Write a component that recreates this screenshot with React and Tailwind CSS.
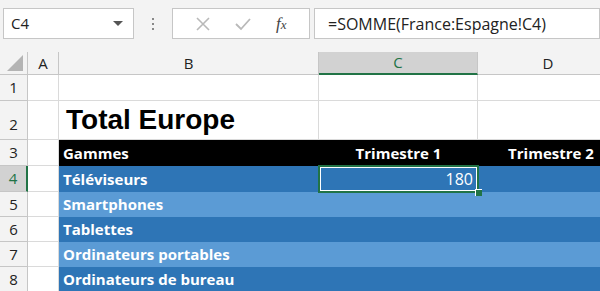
import React from 'react';

const font = { fontFamily: '"Open Sans", "Noto Sans", sans-serif' };

const rows = [
  { n: 1, h: 'h-[26px]' },
  { n: 2, h: 'h-[39px]' },
  { n: 3, h: 'h-[26px]' },
  { n: 4, h: 'h-[26px]' },
  { n: 5, h: 'h-[25px]' },
  { n: 6, h: 'h-[25px]' },
  { n: 7, h: 'h-[25px]' },
  { n: 8, h: 'h-[25px]' },
];

const gammes = {
  4: 'Téléviseurs',
  5: 'Smartphones',
  6: 'Tablettes',
  7: 'Ordinateurs portables',
  8: 'Ordinateurs de bureau',
};

function RowCells({ n }) {
  if (n === 1 || n === 2) {
    return (
      <>
        <div className="w-[31px] shrink-0 border-r border-b border-[#dadada] bg-white" />
        <div className="w-[260px] shrink-0 border-r border-b border-[#dadada] bg-white flex items-end">
          {n === 2 && (
            <span
              className="pl-[7px] pb-[1px] text-[28px] leading-[36px] font-bold text-black"
              style={{ fontFamily: '"Liberation Sans", Arial, sans-serif' }}
            >
              Total Europe
            </span>
          )}
        </div>
        <div className="w-[159px] shrink-0 border-r border-b border-[#dadada] bg-white" />
        <div className="flex-1 border-b border-[#dadada] bg-white" />
      </>
    );
  }
  if (n === 3) {
    return (
      <>
        <div className="w-[31px] shrink-0 border-r border-b border-[#dadada] bg-white" />
        <div className="flex-1 flex bg-black text-white font-bold text-[15px]" style={font}>
          <div className="w-[260px] shrink-0 flex items-center pl-[4px]">Gammes</div>
          <div className="w-[159px] shrink-0 flex items-center justify-center">Trimestre 1</div>
          <div className="w-[146px] shrink-0 flex items-center justify-center">Trimestre 2</div>
        </div>
      </>
    );
  }
  const bg = n % 2 === 0 ? 'bg-[#2e75b6]' : 'bg-[#5b9bd5]';
  return (
    <>
      <div className="w-[31px] shrink-0 border-r border-b border-[#dadada] bg-white" />
      <div className={`flex-1 flex ${bg} text-white font-bold text-[15px]`} style={font}>
        <div className="w-[260px] shrink-0 flex items-center pl-[4px]">{gammes[n]}</div>
        <div className="w-[159px] shrink-0 relative flex items-center justify-end pr-[5px]">
          {n === 4 && (
            <>
              <div className="absolute inset-[-1px] border-2 border-[#217346]">
                <div className="absolute inset-0 border border-white" />
              </div>
              <span className="relative font-normal text-[16px]">180</span>
              <div className="absolute right-[-4px] bottom-[-4px] w-[7px] h-[7px] bg-[#217346] border-l border-t border-white" />
            </>
          )}
        </div>
        <div className="flex-1" />
      </div>
    </>
  );
}

export default function App() {
  return (
    <div className="w-[600px] h-[291px] overflow-hidden bg-white select-none" style={{ fontFamily: '"Open Sans", "Noto Sans", sans-serif' }}>
      {/* formula bar */}
      <div className="h-[52px] bg-[#f3f3f3] flex items-start pt-[8px] relative">
        <div className="ml-[3px] w-[131px] h-[31px] bg-white border border-[#c6c6c6] flex items-center justify-between px-[7px]">
          <span className="text-[15px] text-[#222]">C4</span>
          <svg width="10" height="6" viewBox="0 0 10 6" className="mr-[3px]">
            <path d="M0 0 L10 0 L5 5 Z" fill="#555" />
          </svg>
        </div>
        <div className="w-[38px] h-[31px] flex flex-col items-center justify-center gap-[3px]">
          <span className="w-[2px] h-[2px] bg-[#888]" />
          <span className="w-[2px] h-[2px] bg-[#888]" />
          <span className="w-[2px] h-[2px] bg-[#888]" />
        </div>
        <div className="w-[138px] h-[31px] bg-white border border-[#c6c6c6] flex items-center justify-around px-[10px]">
          <svg width="14" height="14" viewBox="0 0 14 14">
            <path d="M1 1 L13 13 M13 1 L1 13" stroke="#b9b9b9" strokeWidth="1.6" />
          </svg>
          <svg width="16" height="14" viewBox="0 0 16 14">
            <path d="M1 7 L6 12 L15 2" stroke="#b9b9b9" strokeWidth="1.8" fill="none" />
          </svg>
          <span className="text-[17px] italic text-[#444]" style={{ fontFamily: '"Liberation Serif", serif' }}>
            f<span className="text-[13px]">x</span>
          </span>
        </div>
        <div className="ml-[4px] flex-1 h-[31px] bg-white border border-[#c6c6c6] flex items-center pl-[13px]">
          <span className="text-[16px] text-[#222]">=SOMME(France:Espagne!C4)</span>
        </div>
      </div>

      {/* column headers */}
      <div className="flex h-[23px] bg-[#f3f3f3] text-[15px]">
        <div className="w-[28px] shrink-0 border-r border-b border-[#c6c6c6] flex items-end justify-end pr-[4px] pb-[3px]">
          <svg width="16" height="16" viewBox="0 0 16 16">
            <path d="M16 0 L16 16 L0 16 Z" fill="#b4b4b4" />
          </svg>
        </div>
        <div className="w-[31px] shrink-0 border-r border-b border-[#c6c6c6] flex items-center justify-center text-[#222]">A</div>
        <div className="w-[260px] shrink-0 border-r border-b border-[#c6c6c6] flex items-center justify-center text-[#222]">B</div>
        <div className="w-[159px] shrink-0 bg-[#d2d2d2] border-r border-[#c6c6c6] border-b-2 border-b-[#217346] flex items-center justify-center text-[#217346]">C</div>
        <div className="w-[140px] shrink-0 border-b border-[#c6c6c6] flex items-center justify-center text-[#222]">D</div>
      </div>

      {rows.map((r) => (
        <div key={r.n} className={`flex ${r.h}`}>
          <div
            className={`w-[28px] shrink-0 border-b border-[#c6c6c6] flex items-center justify-center text-[15px] ${
              r.n === 4
                ? 'bg-[#d2d2d2] text-[#217346] border-r-2 border-r-[#217346]'
                : 'bg-[#f3f3f3] text-[#222] border-r border-r-[#c6c6c6]'
            } ${r.n === 2 ? 'items-end pb-[4px]' : ''}`}
          >
            {r.n}
          </div>
          <RowCells n={r.n} />
        </div>
      ))}
    </div>
  );
}
